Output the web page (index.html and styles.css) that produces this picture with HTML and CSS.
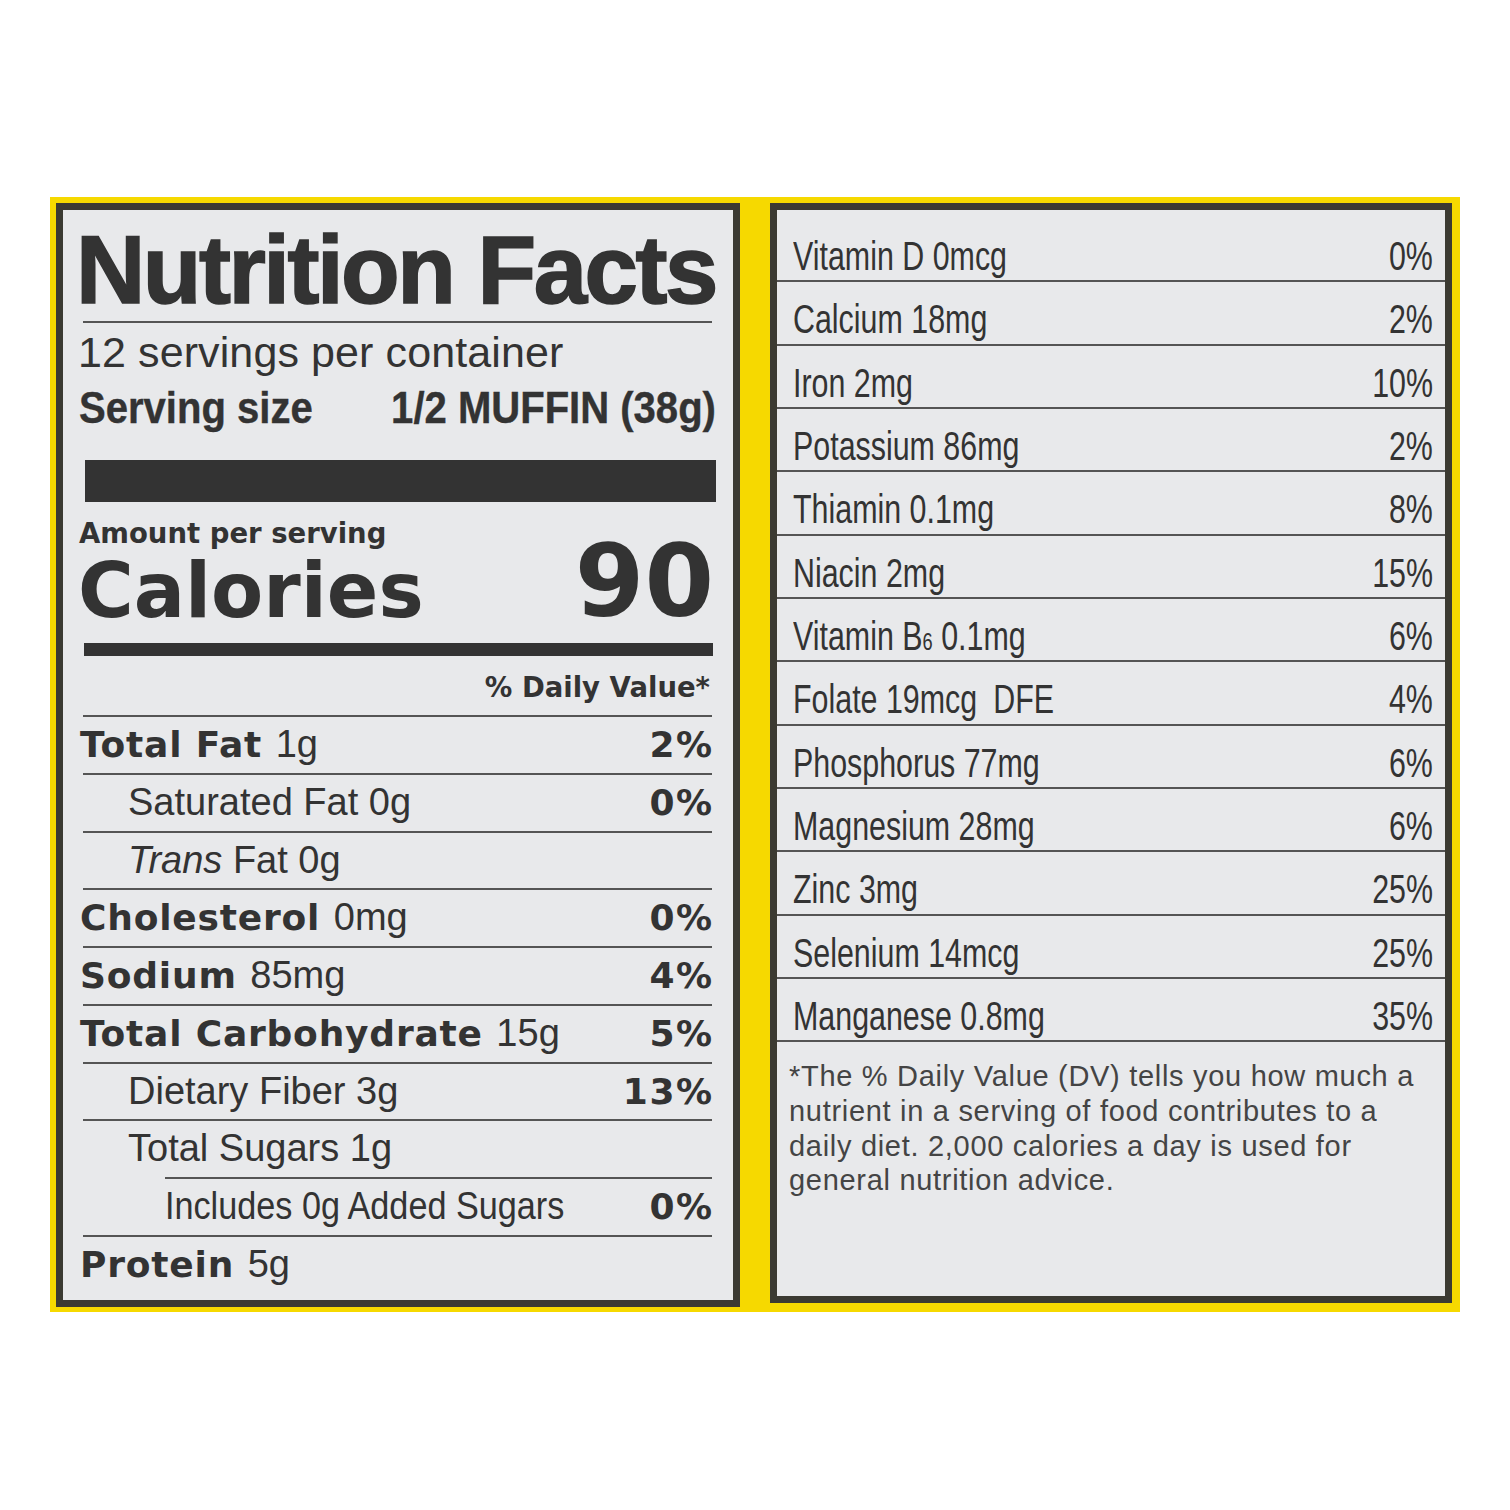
FILE: index.html
```html
<!DOCTYPE html>
<html>
<head>
<meta charset="utf-8">
<title>Nutrition Facts</title>
<link rel="stylesheet" href="styles.css">
</head>
<body>
<div class="stage">
  <div class="band">
    <section class="panel facts">
      <h1 class="title">Nutrition Facts</h1>
      <p class="servings">12 servings per container</p>
      <div class="serving-size"><span class="cond-l">Serving size</span><span class="cond-r">1/2 MUFFIN (38g)</span></div>
      <div class="bar-thick"></div>
      <div class="cal-row">
        <div class="cal-left">
          <div class="amount">Amount per serving</div>
          <div class="calories">Calories</div>
        </div>
        <div class="cal-num">90</div>
      </div>
      <div class="bar-med"></div>
      <div class="dv-head">% Daily Value*</div>
      <div class="row"><span><b class="lbl">Total Fat</b> <span class="amt">1g</span></span><b class="pct">2%</b></div>
      <div class="row"><span class="ind">Saturated Fat 0g</span><b class="pct">0%</b></div>
      <div class="row"><span class="ind"><i>Trans</i> Fat 0g</span></div>
      <div class="row"><span><b class="lbl">Cholesterol</b> <span class="amt">0mg</span></span><b class="pct">0%</b></div>
      <div class="row"><span><b class="lbl">Sodium</b> <span class="amt">85mg</span></span><b class="pct">4%</b></div>
      <div class="row"><span><b class="lbl">Total Carbohydrate</b> <span class="amt">15g</span></span><b class="pct">5%</b></div>
      <div class="row"><span class="ind">Dietary Fiber 3g</span><b class="pct">13%</b></div>
      <div class="row"><span class="ind">Total Sugars 1g</span></div>
      <div class="row sub-row"><span class="includes">Includes 0g Added Sugars</span><b class="pct">0%</b></div>
      <div class="row"><span><b class="lbl">Protein</b> <span class="amt">5g</span></span></div>
    </section>
    <section class="panel vitamins">
      <div class="vrow"><span class="vname">Vitamin D 0mcg</span><span class="vpct">0%</span></div>
      <div class="vrow"><span class="vname">Calcium 18mg</span><span class="vpct">2%</span></div>
      <div class="vrow"><span class="vname">Iron 2mg</span><span class="vpct">10%</span></div>
      <div class="vrow"><span class="vname">Potassium 86mg</span><span class="vpct">2%</span></div>
      <div class="vrow"><span class="vname">Thiamin 0.1mg</span><span class="vpct">8%</span></div>
      <div class="vrow"><span class="vname">Niacin 2mg</span><span class="vpct">15%</span></div>
      <div class="vrow"><span class="vname">Vitamin B<span class="small">6</span> 0.1mg</span><span class="vpct">6%</span></div>
      <div class="vrow"><span class="vname">Folate 19mcg <span class="dfe">DFE</span></span><span class="vpct">4%</span></div>
      <div class="vrow"><span class="vname">Phosphorus 77mg</span><span class="vpct">6%</span></div>
      <div class="vrow"><span class="vname">Magnesium 28mg</span><span class="vpct">6%</span></div>
      <div class="vrow"><span class="vname">Zinc 3mg</span><span class="vpct">25%</span></div>
      <div class="vrow"><span class="vname">Selenium 14mcg</span><span class="vpct">25%</span></div>
      <div class="vrow"><span class="vname">Manganese 0.8mg</span><span class="vpct">35%</span></div>
      <p class="foot">*The % Daily Value (DV) tells you how much a<br>nutrient in a serving of food contributes to a<br>daily diet. 2,000 calories a day is used for<br>general nutrition advice.</p>
    </section>
  </div>
</div>
</body>
</html>
```
FILE: styles.css
```css
* { box-sizing: border-box; margin: 0; padding: 0; }
body { margin: 0; background: #fff; color: #333; font-family: "Liberation Sans", Arial, sans-serif; }

.stage { padding: 197px 50px 0 50px; }
.band {
  width: 1410px; height: 1115px; background: #f6d900;
  display: flex; align-items: flex-start; gap: 30px;
  padding: 6px 8px 0 6px;
}
.panel { background: #e8e9eb; border: 7px solid #3b3a32; }

/* ---------- left: facts ---------- */
.facts { width: 684px; height: 1104px; padding: 0 19px 0 18px; }
.title {
  font: bold 96px/97px "Liberation Sans", Arial, sans-serif;
  letter-spacing: -2.5px; text-indent: -7px; white-space: nowrap;
  -webkit-text-stroke: 1.6px #333; color: #333;
  margin: 11px 2px 0 2px; padding-bottom: 3px; border-bottom: 2px solid #555;
}
.servings { font: 43px/46px "Liberation Sans", Arial, sans-serif; margin-top: 6px; text-indent: -3px; letter-spacing: 0.1px; }
.serving-size {
  display: flex; justify-content: space-between;
  font: bold 44px/46px "Liberation Sans", Arial, sans-serif;
  margin-top: 10px; -webkit-text-stroke: 0.4px #333;
}
.cond-l, .cond-r { display: inline-block; white-space: nowrap; transform: scaleX(0.91); }
.cond-l { transform-origin: left center; margin-left: -2px; }
.cond-r { transform-origin: right center; margin-right: -2px; }
.bar-thick { height: 42px; background: #333; margin: 29px -2px 0 4px; }
.cal-row { display: flex; justify-content: space-between; align-items: flex-end; margin-top: 16px; }
.amount { font: bold 27.5px/30px "DejaVu Sans", sans-serif; margin-left: -2px; }
.calories { font: bold 76px/86px "DejaVu Sans", sans-serif; margin-left: -3px; }
.cal-num { font: bold 100px/104px "DejaVu Sans", sans-serif; }
.bar-med { height: 13px; background: #333; margin: 9px 1px 0 3px; }
.dv-head {
  font: bold 27.5px/30px "DejaVu Sans", sans-serif; text-align: right;
  margin-top: 16px; padding: 0 4px 13px 0;
}
.row {
  display: flex; justify-content: space-between; align-items: baseline;
  height: 57.75px; border-top: 2px solid #555;
  font: 38px/55.75px "Liberation Sans", Arial, sans-serif;
  margin: 0 2px 0 2px;
}
.row b { font: bold 36px/55.75px "DejaVu Sans", sans-serif; }
.row .lbl { margin-left: -3px; letter-spacing: 0.8px; }
.row .pct { letter-spacing: 1.5px; margin-right: -1.5px; }
.row .amt { margin-left: 3px; }
.row .ind { padding-left: 45px; }
.row.sub-row { margin-left: 84px; }
.includes { display: inline-block; white-space: nowrap; transform: scaleX(0.9); transform-origin: left center; }

/* ---------- right: vitamins ---------- */
.vitamins { width: 682px; height: 1100px; padding-top: 9px; }
.vrow {
  display: flex; justify-content: space-between;
  height: 63.33px; padding: 13px 12px 0 16px; border-bottom: 2px solid #555;
  font: 40px/48.33px "Liberation Sans", Arial, sans-serif;
}
.vname, .vpct { display: inline-block; white-space: nowrap; transform: scaleX(0.76); }
.vname { transform-origin: left center; }
.vpct { transform-origin: right center; }
.small { font-size: 60%; }
.dfe { margin-left: 10px; }
.foot {
  font: 29px/34.7px "Liberation Sans", Arial, sans-serif; letter-spacing: 0.7px;
  color: #444; padding: 17px 0 0 12px;
}
```
